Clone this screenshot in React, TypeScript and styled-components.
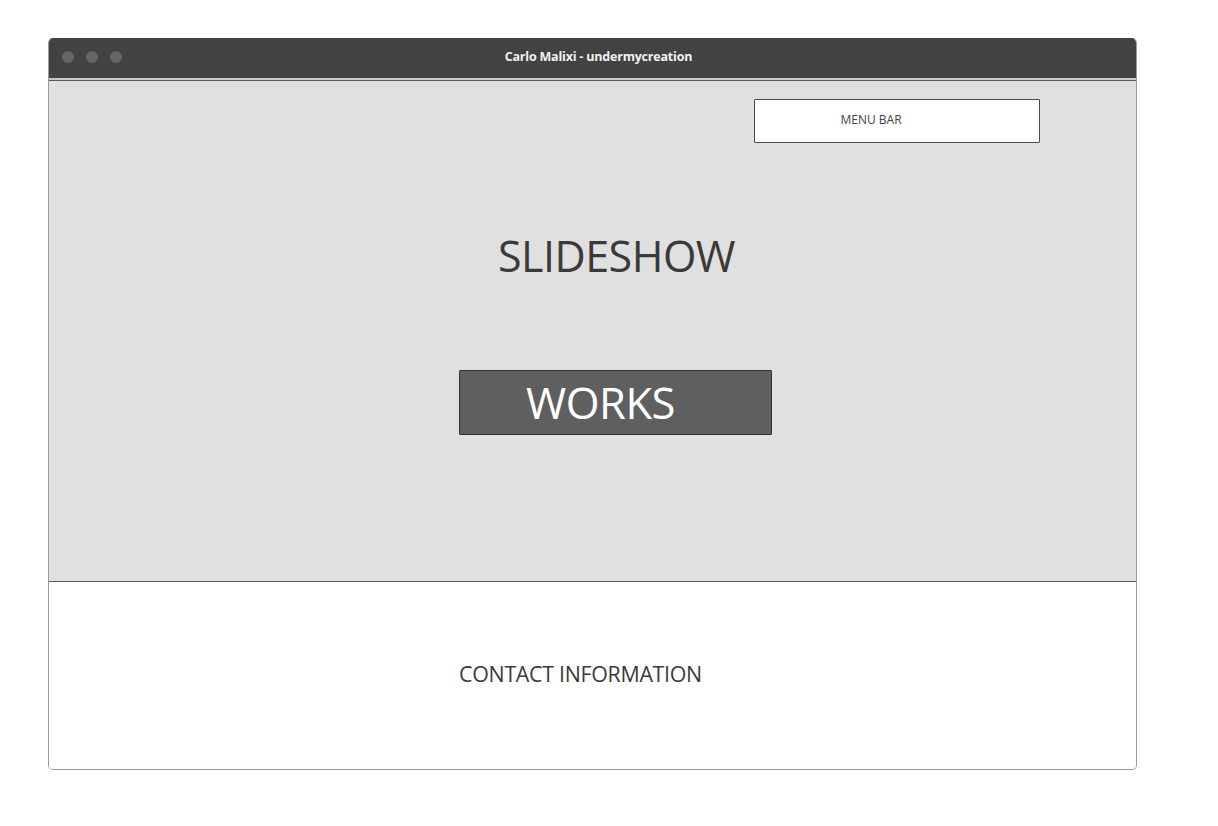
import React from "react";
import styled, { createGlobalStyle } from "styled-components";

const Global = createGlobalStyle`
  html, body { margin: 0; padding: 0; background: #ffffff; }
  body { font-family: "Open Sans", "Liberation Sans", sans-serif; }
`;

const Page = styled.div`
  padding: 38px 0 0 48px;
`;

const Window = styled.div`
  width: 1089px;
  height: 732px;
  display: flex;
  flex-direction: column;
  box-sizing: border-box;
  border-radius: 5px;
  overflow: hidden;
  border: 1px solid #9a9a9a;
  border-top: none;
`;

const TitleBar = styled.div`
  height: 42px;
  background: #424242;
  display: grid;
  grid-template-columns: 1fr auto 1fr;
  align-items: center;
  padding: 0 13px;
  border-bottom: 2px solid #c8c8c8;
  box-sizing: border-box;
  flex: none;
`;

const Dots = styled.div`
  display: flex;
  gap: 12px;
  padding-bottom: 3px;
`;

const Dot = styled.span`
  width: 12px;
  height: 12px;
  border-radius: 50%;
  background: #666666;
`;

const Title = styled.div`
  color: #f2f2f2;
  font-size: 12.5px;
  font-weight: 700;
  letter-spacing: -0.2px;
  padding: 0 0 3px 12px;
`;

const Hero = styled.div`
  height: 502px;
  flex: none;
  background: #e0e0e0;
  border-top: 1px solid #5a5a5a;
  border-bottom: 1px solid #5a5a5a;
  box-sizing: border-box;
  display: flex;
  flex-direction: column;
  padding: 18px 0 0 0;
`;

const MenuRow = styled.div`
  display: flex;
  justify-content: flex-end;
  padding-right: 96px;
`;

const MenuBox = styled.div`
  width: 286px;
  height: 44px;
  box-sizing: border-box;
  background: #ffffff;
  border: 1.5px solid #4a4a4a;
  border-radius: 1px;
  display: flex;
  align-items: center;
  justify-content: center;
  padding: 0 52px 4px 0;
  font-size: 12px;
  color: #444444;
`;

const SlideTitle = styled.div`
  margin-top: 83px;
  text-align: center;
  padding-left: 48px;
  font-size: 43px;
  font-weight: 400;
  color: #3a3a3a;
  letter-spacing: -0.5px;
  line-height: 60px;
`;

const WorksRow = styled.div`
  display: flex;
  justify-content: center;
  margin-top: 84px;
  padding-left: 46px;
`;

const WorksButton = styled.div`
  width: 313px;
  height: 65px;
  box-sizing: border-box;
  background: #5f5f5f;
  border: 1.5px solid #333333;
  border-radius: 1px;
  display: flex;
  align-items: center;
  justify-content: center;
  padding-right: 30px;
  font-size: 43.5px;
  color: #ffffff;
  letter-spacing: -0.5px;
`;

const Footer = styled.div`
  flex: 1;
  background: #ffffff;
  display: flex;
  align-items: center;
  justify-content: center;
  padding-right: 24px;
  padding-bottom: 4px;
  font-size: 21.4px;
  color: #3a3a3a;
  letter-spacing: -0.3px;
`;

export default function App() {
  return (
    <>
      <Global />
      <Page>
        <Window>
          <TitleBar>
            <Dots>
              <Dot />
              <Dot />
              <Dot />
            </Dots>
            <Title>Carlo Malixi - undermycreation</Title>
            <span />
          </TitleBar>
          <Hero>
            <MenuRow>
              <MenuBox>MENU BAR</MenuBox>
            </MenuRow>
            <SlideTitle>SLIDESHOW</SlideTitle>
            <WorksRow>
              <WorksButton>WORKS</WorksButton>
            </WorksRow>
          </Hero>
          <Footer>CONTACT INFORMATION</Footer>
        </Window>
      </Page>
    </>
  );
}
